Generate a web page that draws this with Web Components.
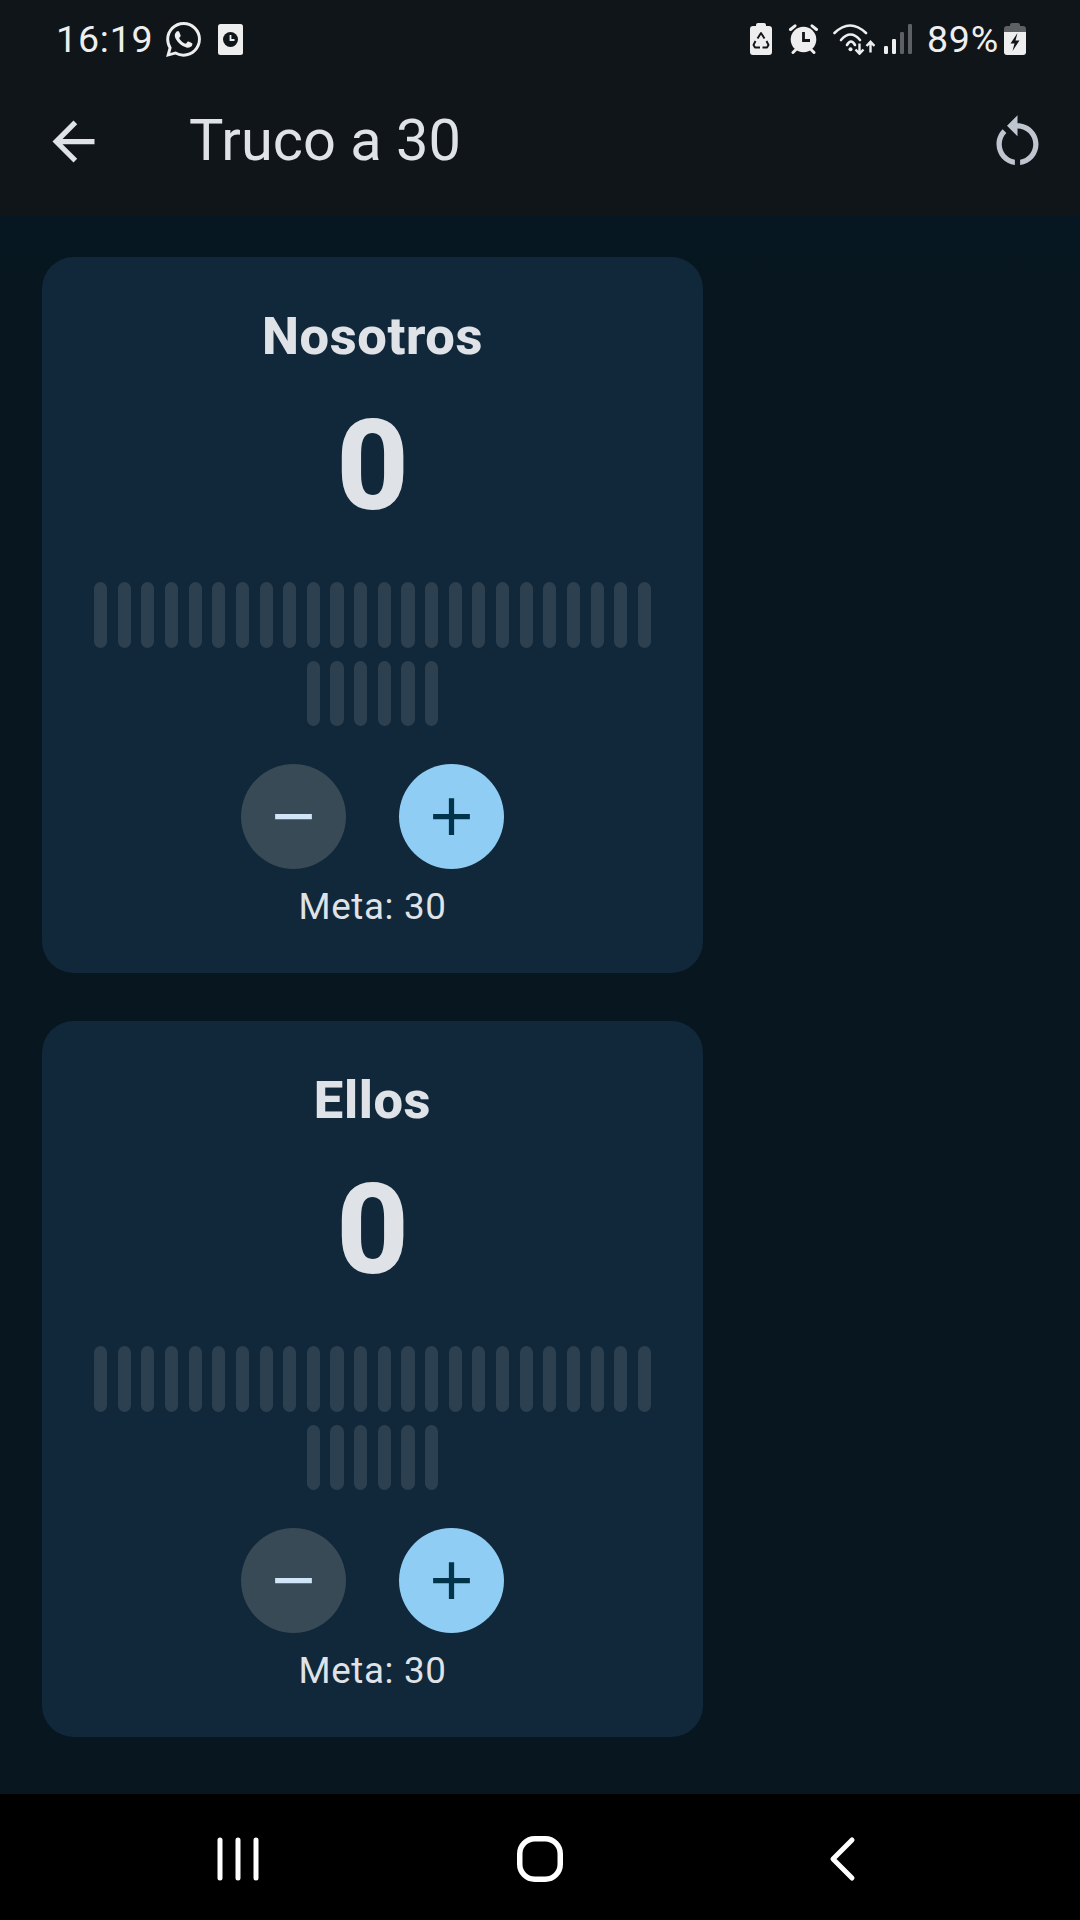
<!DOCTYPE html>
<html>
<head>
<meta charset="utf-8">
<title>Truco a 30</title>
<style>
  html, body { margin: 0; padding: 0; }
  body {
    width: 1080px;
    height: 1920px;
    overflow: hidden;
    display: flex;
    flex-direction: column;
    background: #07161f;
    font-family: Roboto, "Liberation Sans", sans-serif;
  }
  main-area { flex: 1; }
</style>
</head>
<body>
  <status-bar></status-bar>
  <app-bar title="Truco a 30"></app-bar>
  <main-area>
    <score-card name="Nosotros" score="0" goal="30"></score-card>
    <score-card name="Ellos" score="0" goal="30"></score-card>
  </main-area>
  <nav-bar></nav-bar>

<script>
class StatusBar extends HTMLElement {
  constructor() {
    super();
    const shadow = this.attachShadow({mode:'open'});
    shadow.innerHTML = `
      <style>
        :host {
          display: flex;
          align-items: center;
          box-sizing: border-box;
          height: 68px;
          padding: 10px 54.5px 0 56px;
          background: #101519;
          color: #eeeeee;
          font-size: 37.5px;
          letter-spacing: 0.8px;
        }
        svg { display: block; flex: none; fill: #eeeeee; }
        svg.line { fill: none; }
        .time { margin-right: 12.5px; }
        .pct { margin: 0 4.5px 0 15px; }
        .spacer { flex: 1; }
      </style>
      <span class="time">16:19</span>
      <svg width="35" height="35" viewBox="0 0 24 24"><path d="M17.472 14.382c-.297-.149-1.758-.867-2.03-.967-.273-.099-.471-.148-.67.15-.197.297-.767.966-.94 1.164-.173.199-.347.223-.644.075-.297-.15-1.255-.463-2.39-1.475-.883-.788-1.48-1.761-1.653-2.059-.173-.297-.018-.458.13-.606.134-.133.298-.347.446-.52.149-.174.198-.298.298-.497.099-.198.05-.371-.025-.52-.075-.149-.669-1.612-.916-2.207-.242-.579-.487-.5-.669-.51-.173-.008-.371-.01-.57-.01-.198 0-.52.074-.792.372-.272.297-1.04 1.016-1.04 2.479 0 1.462 1.065 2.875 1.213 3.074.149.198 2.096 3.2 5.077 4.487.709.306 1.262.489 1.694.625.712.227 1.36.195 1.871.118.571-.085 1.758-.719 2.006-1.413.248-.694.248-1.289.173-1.413-.074-.124-.272-.198-.57-.347m-5.421 7.403h-.004a9.87 9.87 0 01-5.031-1.378l-.361-.214-3.741.982.998-3.648-.235-.374a9.86 9.86 0 01-1.51-5.26c.001-5.45 4.436-9.884 9.888-9.884 2.64 0 5.122 1.03 6.988 2.898a9.825 9.825 0 012.893 6.994c-.003 5.45-4.437 9.884-9.885 9.884m8.413-18.297A11.815 11.815 0 0012.05 0C5.495 0 .16 5.335.157 11.892c0 2.096.547 4.142 1.588 5.945L.057 24l6.305-1.654a11.882 11.882 0 005.683 1.448h.005c6.554 0 11.89-5.335 11.893-11.893a11.821 11.821 0 00-3.48-8.413z"/></svg>
      <svg style="margin-left:17px" width="25" height="31" viewBox="0 0 25 31">
        <rect width="25" height="31" rx="2.5"/>
        <circle cx="12.5" cy="15.5" r="7.500" style="fill:#101519"/>
        <path d="M12.5 11v5h4" style="fill:none" stroke="#eeeeee" stroke-width="1.8"/>
      </svg>
      <span class="spacer"></span>
      <svg width="22" height="32" viewBox="0 0 22 32">
        <path d="M6 3V2a2 2 0 012-2h6a2 2 0 012 2v1h3a3 3 0 013 3v23a3 3 0 01-3 3H3a3 3 0 01-3-3V6a3 3 0 013-3z"/>
        <path d="M7.500 15.500L11 10l3.500 5.500M5.500 18l-2 4 1.500 2.500h5M12.500 24.500H17l1.500-2.500-2-4" style="fill:none" stroke="#101519" stroke-width="1.900" stroke-linejoin="round"/>
      </svg>
      <svg style="margin-left:16px" width="31" height="30" viewBox="0 0 31 30">
        <circle cx="15.5" cy="15.5" r="12.800"/>
        <path d="M15.5 8v8.500h6.500" style="fill:none" stroke="#101519" stroke-width="2.8"/>
        <path d="M2.500 5.500L7 1.800M28.500 5.500L24 1.800M5 28.500l2.500-2.500M26 28.500L23.500 26" style="fill:none" stroke="#eeeeee" stroke-width="3" stroke-linecap="round"/>
      </svg>
      <svg class="line" style="margin-left:14px" width="42" height="31" viewBox="0 0 42 31" stroke="#eeeeee" stroke-width="2.6" stroke-linecap="round">
        <path d="M1.500 9Q17 -6 33 9"/>
        <path d="M8 16Q17.500 5 27 16"/>
        <path d="M14 21Q18 14 22 21"/>
        <circle cx="17.5" cy="25.3" r="2" style="fill:#eeeeee" stroke="none"/>
        <path d="M26.500 19.500v10M22.500 25.500l4 4.200 4-4.200M37.500 28.500v-10M33.500 22l4-4.200 4 4.200" stroke-width="2.400" stroke-linecap="butt"/>
      </svg>
      <svg style="margin-left:9px" width="28" height="30" viewBox="0 0 28 30">
        <rect x="0" y="22" width="4" height="8" rx="1.2"/>
        <rect x="8" y="15" width="4" height="15" rx="1.2"/>
        <rect x="16" y="8" width="4" height="22" rx="1.2" style="fill:#5e6163"/>
        <rect x="24" y="0" width="4" height="30" rx="1.2" style="fill:#5e6163"/>
      </svg>
      <span class="pct">89%</span>
      <svg width="22" height="32" viewBox="0 0 22 32">
        <path d="M6 3V2a2 2 0 012-2h6a2 2 0 012 2v1h3a3 3 0 013 3v4H0V6a3 3 0 013-3z" style="fill:#5e6163"/>
        <path d="M0 9h22v20a3 3 0 01-3 3H3a3 3 0 01-3-3z"/>
        <path d="M13.5 10l-7 10.5h4L8.500 28l7-10.500h-4z" style="fill:#101519"/>
      </svg>`;
  }
}

class AppBar extends HTMLElement {
  static get observedAttributes() {
    return ['title'];
  }
  constructor() {
    super();
    const shadow = this.attachShadow({mode:'open'});
    shadow.innerHTML = `
      <style>
        :host {
          display: flex;
          align-items: center;
          box-sizing: border-box;
          height: 147px;
          padding: 0 31.5px 0 42px;
          background: #101519;
        }
        svg { display: block; flex: none; }
        #title {
          flex: 1;
          margin-left: 84px;
          padding-bottom: 4px;
          font-size: 57.75px;
          line-height: 76px;
          color: #dfe3e8;
        }
      </style>
      <svg width="63" height="63" viewBox="0 0 24 24" fill="#dfe3e8"><path d="M20 11H7.830l5.590-5.590L12 4l-8 8 8 8 1.410-1.410L7.830 13H20v-2z"/></svg>
      <div id="title"></div>
      <svg width="63" height="63" viewBox="0 0 24 24" fill="#bfc6d0"><path d="M12 5V2L8 6l4 4V7c3.310 0 6 2.690 6 6 0 2.970-2.170 5.430-5 5.910v2.020c3.950-.49 7-3.850 7-7.930 0-4.420-3.580-8-8-8zm-6 8c0-1.650.67-3.150 1.760-4.240L6.340 7.340C4.900 8.790 4 10.790 4 13c0 4.080 3.050 7.440 7 7.930v-2.020c-2.830-.48-5-2.940-5-5.910z"/></svg>`;
  }
  attributeChangedCallback(name, oldValue, newValue) {
    this.shadowRoot.querySelector('#title').textContent = newValue;
  }
}

class MainArea extends HTMLElement {
  constructor() {
    super();
    const shadow = this.attachShadow({mode:'open'});
    shadow.innerHTML = `
      <style>
        :host {
          display: flex;
          flex-direction: column;
          align-items: flex-start;
          gap: 48px;
          padding: 42px;
          background: linear-gradient(#061622, #07161f 60px);
        }
      </style>
      <slot></slot>`;
  }
}

class TickRow extends HTMLElement {
  constructor() {
    super();
    const shadow = this.attachShadow({mode:'open'});
    const count = Number(this.getAttribute('count')) || 30;
    shadow.innerHTML = `
      <style>
        :host {
          display: flex;
          flex-wrap: wrap;
          justify-content: center;
          gap: 13.1px 10.55px;
        }
        i {
          display: block;
          width: 13.1px;
          height: 65.6px;
          border-radius: 7px;
          background: #2c4050;
        }
      </style>
      ${'<i></i>'.repeat(count)}`;
  }
}

class RoundButton extends HTMLElement {
  constructor() {
    super();
    const shadow = this.attachShadow({mode:'open'});
    shadow.innerHTML = `
      <style>
        :host {
          display: flex;
          align-items: center;
          justify-content: center;
          width: 105px;
          height: 105px;
          border-radius: 50%;
          background: #384a56;
          color: #d0e5f8;
        }
        :host([primary]) {
          background: #90cdf4;
          color: #00344a;
        }
        svg { display: block; fill: currentColor; }
      </style>
      <svg width="63" height="63" viewBox="0 0 24 24"><path d="${this.hasAttribute('primary') ? 'M19 13h-6v6h-2v-6H5v-2h6V5h2v6h6v2z' : 'M19 13H5v-2h14v2z'}"/></svg>`;
  }
}

class ScoreCard extends HTMLElement {
  constructor() {
    super();
    const shadow = this.attachShadow({mode:'open'});
    shadow.innerHTML = `
      <style>
        :host {
          display: flex;
          flex-direction: column;
          align-items: center;
          box-sizing: border-box;
          width: 661px;
          padding: 49px 42px 44px;
          border-radius: 31.5px;
          background: #11273a;
          color: #dfe3e8;
        }
        .name {
          font-size: 52.5px;
          line-height: 60px;
          font-weight: 800;
          letter-spacing: 0.6px;
        }
        .score {
          margin-top: 30px;
          font-size: 126px;
          line-height: 140px;
          font-weight: 800;
        }
        tick-row {
          margin-top: 46px;
          align-self: stretch;
        }
        .buttons {
          display: flex;
          gap: 52.5px;
          margin-top: 37.7px;
        }
        .goal {
          margin-top: 16px;
          font-size: 36.75px;
          line-height: 44px;
          letter-spacing: 0.65px;
        }
      </style>
      <div class="name">${this.getAttribute('name')}</div>
      <div class="score">${this.getAttribute('score')}</div>
      <tick-row count="${this.getAttribute('goal')}"></tick-row>
      <div class="buttons">
        <round-button></round-button>
        <round-button primary></round-button>
      </div>
      <div class="goal">Meta: ${this.getAttribute('goal')}</div>`;
  }
}

class NavBar extends HTMLElement {
  constructor() {
    super();
    const shadow = this.attachShadow({mode:'open'});
    shadow.innerHTML = `
      <style>
        :host {
          display: grid;
          grid-template-columns: repeat(3, 302px);
          justify-content: center;
          align-items: center;
          box-sizing: border-box;
          height: 126px;
          padding-top: 3px;
          background: #000;
        }
        div { display: flex; justify-content: center; }
        svg { display: block; fill: none; stroke: #fff; stroke-linecap: round; stroke-linejoin: round; }
      </style>
      <div><svg width="44" height="48" viewBox="0 0 44 48" stroke-width="5"><path d="M4 5v38M22 5v38M40 5v38"/></svg></div>
      <div><svg width="48" height="48" viewBox="0 0 48 48" stroke-width="5.500"><rect x="3.750" y="3.750" width="40.500" height="40.500" rx="15"/></svg></div>
      <div><svg width="28" height="48" viewBox="0 0 28 48" stroke-width="5"><path d="M24 5L5 24l19 19"/></svg></div>`;
  }
}

customElements.define('status-bar', StatusBar);
customElements.define('app-bar', AppBar);
customElements.define('main-area', MainArea);
customElements.define('tick-row', TickRow);
customElements.define('round-button', RoundButton);
customElements.define('score-card', ScoreCard);
customElements.define('nav-bar', NavBar);
</script>
</body>
</html>
